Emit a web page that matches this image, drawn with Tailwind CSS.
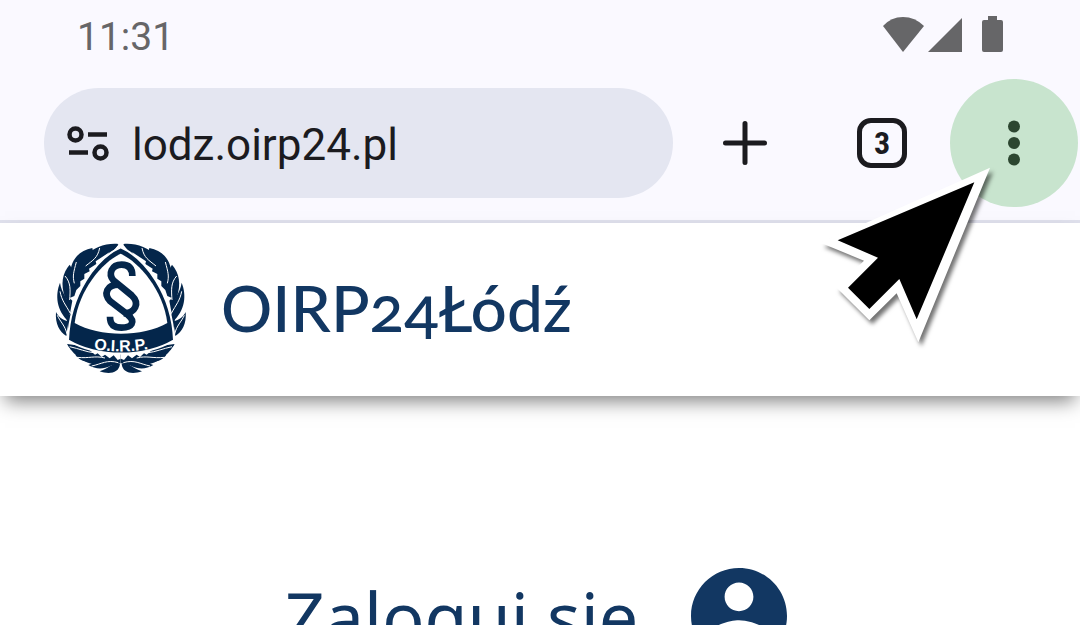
<!DOCTYPE html>
<html lang="pl">
<head>
  <meta charset="UTF-8" />
  <title>OIRP24Łódź</title>
  <meta name="viewport" content="width=device-width, initial-scale=1.0" />
  <script src="https://cdn.jsdelivr.net/npm/@tailwindcss/browser@4"></script>
</head>

<body class="bg-white font-['Roboto',sans-serif] overflow-hidden">

  <!-- Phone status bar and browser toolbar -->
  <div class="bg-[#faf9ff] border-b-3 border-[#e0e1ed] pb-[13px]">
    <div class="h-[79px] flex items-start justify-between pl-[77px] pr-[76px]">
      <time class="text-[39px] leading-[48px] pt-[13px] text-[#666668]">11:31</time>
      <div class="flex items-start pt-4 text-[#666668]">
        <svg class="w-[42px] h-9" viewBox="0 0 42 36" fill="currentColor"><path d="M1 10Q9 1 21 1T42 10L21 36Z" /></svg>
        <svg class="w-[35px] h-9 ml-1" viewBox="0 0 35 36" fill="currentColor"><path d="M0 36L34 2V36Z" /></svg>
        <svg class="w-[22px] h-9 ml-[19px]" viewBox="0 0 22 36" fill="currentColor"><path d="M6 0h9v4h4a2 2 0 0 1 2 2v28a2 2 0 0 1-2 2H2a2 2 0 0 1-2-2V6a2 2 0 0 1 2-2h4Z" /></svg>
      </div>
    </div>

    <div class="flex items-center pl-[44px] pr-[2px] text-[#1b1b1f]">
      <form class="flex-1 min-w-0 h-[110px] rounded-full bg-[#e4e6f1] flex items-center pl-[23px] pr-10">
        <button type="button" aria-label="Informacje o stronie" class="shrink-0">
          <svg class="w-[42px] h-[35px]" viewBox="0 0 42 35" fill="none" stroke="currentColor" stroke-width="4.500">
            <circle cx="8.500" cy="8.500" r="6" />
            <path d="M21 8.500h19M2 26.500h19" />
            <circle cx="33.500" cy="26.500" r="6" />
          </svg>
        </button>
        <input type="text" aria-label="Adres strony" value="lodz.oirp24.pl" class="flex-1 min-w-0 ml-[23px] pt-1 text-[44px] leading-[56px] bg-transparent outline-none" />
      </form>
      <button type="button" aria-label="Nowa karta" class="ml-[50px]">
        <svg class="w-11 h-11" viewBox="0 0 44 44" fill="none" stroke="currentColor" stroke-width="5" stroke-linecap="round"><path d="M22 2.500v39M2.500 22h39" /></svg>
      </button>
      <button type="button" aria-label="Karty: 3" class="ml-[90px] w-[50px] h-[50px] border-5 border-current rounded-[14px] font-['Roboto_Condensed','Roboto',sans-serif] text-[32px] leading-[40px] font-bold">3</button>
      <div class="relative ml-[43px] z-10">
        <button type="button" aria-label="Menu" class="w-32 h-32 rounded-full bg-[#c8e4ce] text-[#2c4630] flex items-center justify-center">
          <svg class="w-3 h-[46px]" viewBox="0 0 12 46" fill="currentColor">
            <circle cx="6" cy="6.500" r="6" /><circle cx="6" cy="23" r="6" /><circle cx="6" cy="39.500" r="6" />
          </svg>
        </button>
        <!-- Pointer over the menu button -->
        <svg class="absolute -left-[140px] top-[71px] w-[200px] h-[200px] max-w-none pointer-events-none drop-shadow-[3px_4px_2px_rgb(0_0_0/0.55)]" viewBox="0 0 600 600">
          <path fill="#fff" d="M540 53L33 279L162 332L80 413L178 511L260 430L325 577Z" />
          <path fill="#000" d="M493 97L83 271L204 323L114 413L178 477L268 387L320 508Z" />
        </svg>
      </div>
    </div>
  </div>

  <!-- Site header -->
  <header class="h-[173px] bg-white flex items-center pl-[55px] pb-[3px] shadow-[0_10px_18px_-5px_rgb(0_0_0/0.5)]">
    <a href="#" class="flex items-center gap-[34px] text-[#123762]">
      <svg class="w-[132px] h-[132px]" viewBox="46 36 396 396" role="img" aria-label="O.I.R.P.">
        <defs>
          <g id="branch">
            <g fill="#04264b">
              <path d="M236 44C180 50 130 84 105 120C82 160 72 230 86 300L110 230L150 140Z" />
              <path d="M84 344C110 392 170 422 243 400V370Z" />
              <path d="M236 42C196 38 150 56 130 88L139 112C176 94 210 82 236 42Z" />
              <path d="M158 54C112 62 90 98 92 138L110 172C128 140 174 116 158 54Z" />
              <path d="M90 104C68 128 62 164 76 202L97 222C108 188 116 142 90 104Z" />
              <path d="M61 158C46 196 50 240 88 276L98 226C82 206 66 190 61 158Z" />
              <path d="M49 246C46 282 60 306 80 318L86 274C68 270 56 260 49 246Z" />
              <path d="M82 342C98 372 136 376 168 368C144 350 112 346 82 342Z" />
              <path d="M107 374C126 402 166 402 194 374C162 362 142 378 107 374Z" />
              <path d="M146 405C176 424 216 416 236 386C204 366 184 392 146 405Z" />
              <path d="M180 424C208 434 238 430 241 402C216 396 214 414 180 424Z" />
            </g>
            <g fill="none" stroke="#fff" stroke-width="3">
              <path d="M180 54C174 84 160 90 138 108" />
              <path d="M110 96C102 126 98 138 104 160" />
              <path d="M76 138C94 158 92 180 90 210" />
              <path d="M61 184C66 212 78 224 92 250" />
              <path d="M53 256C62 276 76 286 82 312" />
              <path d="M90 350C118 356 140 366 162 368" />
              <path d="M112 382C150 386 164 376 196 384" />
              <path d="M156 408C186 402 202 388 236 398" />
            </g>
            <!-- notches between the leaves and the shield -->
            <path fill="#fff" d="M210 66L168 94L170 102L148 116L150 124L134 132L134 146L122 154L122 168L110 180L104 198L90 204L98 212L90 256L112 216L134 172Z" />
            <path fill="#fff" d="M150 360L166 374L174 370L186 381L196 374L210 385L222 376L234 390L243 386V366Z" />
          </g>
        </defs>
        <use href="#branch" />
        <use href="#branch" transform="translate(487 0) scale(-1 1)" />
        <path fill="#04264b" stroke="#fff" stroke-width="6" d="M243 52C170 84 90 192 85 331C176 384 312 384 403 331C398 192 316 84 243 52Z" />
        <path fill="#fff" d="M243 71C188 97 118 178 105 279C180 322 308 322 383 279C370 178 298 97 243 71Z" />
        <g fill="none" stroke="#04264b" stroke-width="20">
          <path d="M278 138C278 112 264 104 246 104C216 104 204 132 222 152L276 196C302 220 286 250 252 250" />
          <path d="M236 164C202 164 190 192 212 214L264 254C290 276 276 293 246 293C226 293 211 286 211 260" />
        </g>
        <path id="motto" fill="none" d="M140 353Q244 375 348 353" />
        <text fill="#fff" class="font-['Liberation_Sans',sans-serif] font-bold text-[48px]" text-anchor="middle"><textPath href="#motto" startOffset="50%">O.I.R.P.</textPath></text>
      </svg>
      <span class="font-['Lato','Noto_Sans',sans-serif] font-medium text-[64px] leading-[84px] oldstyle-nums">OIRP24Łódź</span>
    </a>
  </header>

  <main class="pt-[172px] pr-2 flex justify-center">
    <a href="#" class="flex items-center gap-[53px] text-[#123762]">
      <span class="font-['Noto_Sans',sans-serif] text-[70px] leading-[96px]">Zaloguj się</span>
      <svg class="w-24 h-24" viewBox="2 2 20 20" fill="currentColor"><path d="M12 2C6.480 2 2 6.480 2 12s4.480 10 10 10 10-4.480 10-10S17.520 2 12 2zm0 3c1.660 0 3 1.340 3 3s-1.340 3-3 3-3-1.340-3-3 1.340-3 3-3zm0 14.200c-2.500 0-4.710-1.280-6-3.220.030-1.990 4-3.080 6-3.080 1.990 0 5.970 1.090 6 3.080-1.290 1.940-3.500 3.220-6 3.220z" /></svg>
    </a>
  </main>

</body>
</html>
